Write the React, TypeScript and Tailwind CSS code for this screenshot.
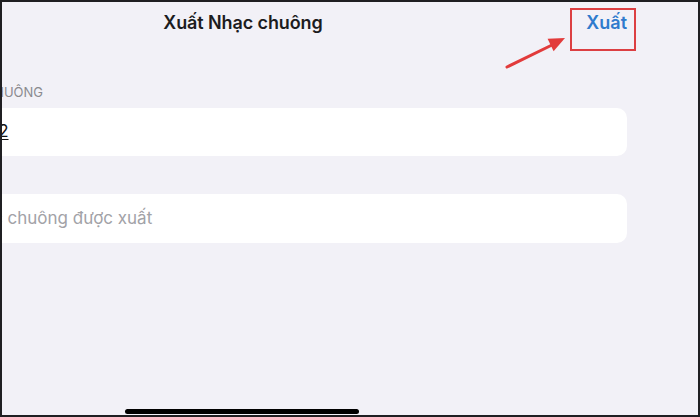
import React from 'react';

// Red callout arrow pointing at the export button
const CalloutArrow = () => (
  <svg
    className="pointer-events-none absolute left-[500px] top-[30px]"
    width="70"
    height="42"
    viewBox="0 0 70 42"
  >
    <line x1="7" y1="37" x2="52" y2="15" stroke="#e23b3b" strokeWidth="3" strokeLinecap="round" />
    <polygon points="65,8 47.6,8.7 53.6,21.3" fill="#e23b3b" />
  </svg>
);

const App = () => {
  return (
    <div className="relative h-[417px] w-[700px] overflow-hidden bg-[#1f1f22] p-[2px]">
      <div className="h-full w-full overflow-hidden bg-[#f2f1f7] font-['Inter','Noto_Sans',sans-serif]">
        <div className="ml-[-143px] w-[768px]">
          {/* nav bar */}
          <header className="grid h-[40px] grid-cols-[1fr_auto_1fr] items-center">
            <span />
            <h1 className="text-[18px] font-semibold tracking-[-0.1px] text-[#1c1c1e]">Xuất Nhạc chuông</h1>
            <button className="justify-self-end text-[18px] font-semibold text-[#2f7bcd]">Xuất</button>
          </header>

          <section className="pt-[42px]">
            <p className="h-[16px] pl-[55px] text-[13px] leading-[16px] text-[#8a8a8f] uppercase">
              Tên nhạc chuông
            </p>
            <div className="mt-[8px] flex h-[48px] items-center rounded-[10px] bg-white pl-[27px]">
              <span className="text-[17px] text-[#111] underline underline-offset-2">Nhạc chuông 2</span>
            </div>
          </section>

          <section className="pt-[38px]">
            <div className="flex h-[49px] items-center rounded-[10px] bg-white pl-[70px]">
              <span className="text-[17px] text-[#a2a2a7]">Tên nhạc chuông được xuất</span>
            </div>
          </section>
        </div>
      </div>

      {/* highlight around the export button */}
      <div className="pointer-events-none absolute left-[570px] top-[8px] h-[43px] w-[66px] border-2 border-[#dc3f42]" />
      <CalloutArrow />

      {/* home indicator */}
      <div className="absolute left-[125px] top-[409px] h-[5px] w-[234px] rounded-full bg-black" />
    </div>
  );
};

export default App;
